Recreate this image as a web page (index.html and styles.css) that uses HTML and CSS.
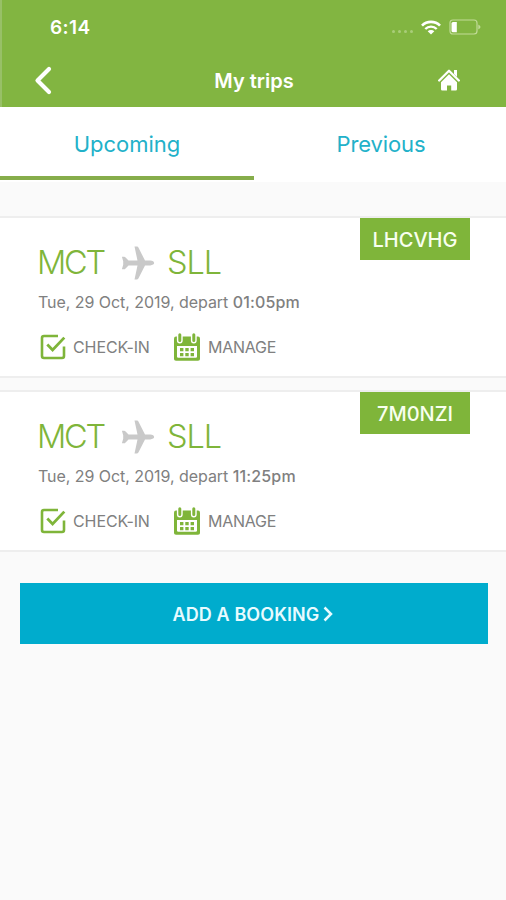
FILE: index.html
```html
<!DOCTYPE html>
<html lang="en">
<head>
<meta charset="utf-8">
<title>My trips</title>
<link rel="stylesheet" href="styles.css">
</head>
<body>
<svg class="sprite" aria-hidden="true">
  <symbol id="plane" viewBox="0 0 34 34">
    <path d="M14 .6h2.600q.9 0 1.300.8l6.600 13.200h5.200q3.800.4 3.900 2.400-.1 2-3.900 2.400h-5.200l-6.600 13.200q-.4.800-1.300.8H14l3-14H8l-3.200 3.400q-.4.500-1 .5H1.400l1.300-4.600v-3.400L1.400 10.700h2.400q.6 0 1 .5L8 14.600h9z" fill="#c9c9c9"/>
  </symbol>
  <symbol id="check" viewBox="0 0 26 26">
    <path d="M18 2H4Q2 2 2 4v18q0 2 2 2h18q2 0 2-2v-9.500" fill="none" stroke="#7fb53a" stroke-width="2.600"/>
    <path d="M7.300 10.600l5.300 5.400L24.300 3.600" fill="none" stroke="#7fb53a" stroke-width="2.800"/>
  </symbol>
  <symbol id="calendar" viewBox="0 0 28 28">
    <path d="M3 3.500h22q2 0 2 2V26q0 1.800-2 1.800H3q-2 0-2-1.800V5.500q0-2 2-2z" fill="#7fb53a"/>
    <path d="M4 13h20v10.500q0 1.300-1.300 1.300H5.300Q4 24.800 4 23.500z" fill="#fff"/>
    <g fill="none" stroke-linecap="round"><path d="M6.800 2.500v5M20.800 2.500v5" stroke="#fff" stroke-width="5.800"/><path d="M6.800 1.800v5.600M20.800 1.800v5.600" stroke="#7fb53a" stroke-width="3"/></g>
    <path d="M7 15h3.400v3.200H7zM12.300 15h3.400v3.200h-3.400zM17.600 15H21v3.200h-3.400zM7 20h3.400v3.200H7zM12.300 20h3.400v3.200h-3.400zM17.600 20H21v3.200h-3.400z" fill="#7fb53a"/>
  </symbol>
</svg>

<header class="header">
  <div class="status">
    <span class="time">6:14</span>
    <div class="indicators">
      <span class="signal"><i></i><i></i><i></i><i></i></span>
      <svg class="wifi" viewBox="0 0 20 15"><g fill="none" stroke="#fff"><path d="M1 5.600a12.800 12.800 0 0 1 18 0" stroke-width="2.700"/><path d="M4.300 9a8 8 0 0 1 11.400 0" stroke-width="2.400"/></g><path d="M6.700 11.300a4.700 4.700 0 0 1 6.600 0L10 14.600z" fill="#fff"/></svg>
      <svg class="battery" viewBox="0 0 32 16"><path d="M4 1h21q3 0 3 3v8q0 3-3 3H4q-3 0-3-3V4q0-3 3-3z" fill="none" stroke="#c1db98" stroke-width="1.200"/><path d="M29.300 5.500q4.400 2.500 0 5z" fill="#c1db98"/><path d="M4 3h3.800v10.200H4q-1.500 0-1.500-1.500V4.500Q2.500 3 4 3z" fill="#fff"/></svg>
    </div>
  </div>
  <div class="titlebar">
    <svg class="back" viewBox="0 0 18 30"><path d="M15 3L3.500 14.500L15 26" fill="none" stroke="#fff" stroke-width="4.200" stroke-linecap="round" stroke-linejoin="round"/></svg>
    <h1 class="title">My trips</h1>
    <svg class="home" viewBox="0 0 22 22"><path d="M1.200 11.500L11 1.800l9.800 9.700" fill="none" stroke="#fff" stroke-width="2.300" stroke-linecap="round" stroke-linejoin="round"/><path d="M16 1h3v7l-3-3z" fill="#fff"/><path d="M11 5.300l8 7.900v7.100q0 1.200-1.200 1.200h-4.600v-5H9v5H4.200Q3 21.500 3 20.300v-7.100z" fill="#fff"/></svg>
  </div>
</header>

<nav class="tabs">
  <a class="tab tab-active">Upcoming</a>
  <a class="tab tab-previous">Previous</a>
</nav>

<main class="trips">
  <article class="trip">
    <div class="details">
      <h2 class="route"><span class="origin">MCT</span><svg class="plane"><use href="#plane"/></svg><span class="destination">SLL</span></h2>
      <p class="departure">Tue, 29 Oct, 2019, depart <b>01:05pm</b></p>
      <div class="actions">
        <a class="action checkin"><svg class="check"><use href="#check"/></svg><span>CHECK-IN</span></a>
        <a class="action manage"><svg class="calendar"><use href="#calendar"/></svg><span>MANAGE</span></a>
      </div>
    </div>
    <span class="code">LHCVHG</span>
  </article>
  <article class="trip">
    <div class="details">
      <h2 class="route"><span class="origin">MCT</span><svg class="plane"><use href="#plane"/></svg><span class="destination">SLL</span></h2>
      <p class="departure">Tue, 29 Oct, 2019, depart <b>11:25pm</b></p>
      <div class="actions">
        <a class="action checkin"><svg class="check"><use href="#check"/></svg><span>CHECK-IN</span></a>
        <a class="action manage"><svg class="calendar"><use href="#calendar"/></svg><span>MANAGE</span></a>
      </div>
    </div>
    <span class="code">7M0NZI</span>
  </article>
</main>

<button class="add"><span>ADD A BOOKING</span><svg class="chevron" viewBox="0 0 10 16"><path d="M1.500 1.500L8 8l-6.500 6.500" fill="none" stroke="#e8fbff" stroke-width="2.500"/></svg></button>
</body>
</html>
```

FILE: styles.css
```css
* { box-sizing: border-box; }
body {
  margin: 0;
  min-height: 900px;
  background: #fafafa;
  font-family: Inter, "Liberation Sans", sans-serif;
  color: #808080;
}
.sprite { position: absolute; width: 0; height: 0; }
svg { display: block; flex: none; }

.header {
  height: 107px;
  background: #82b541;
  border-left: 2px solid #98c067;
  color: #fff;
}
.status {
  display: flex;
  justify-content: space-between;
  align-items: center;
  height: 54px;
  padding: 0 25px 0 48px;
}
.time { font-size: 19px; font-weight: 600; letter-spacing: 0.4px; }
.indicators { display: flex; align-items: center; }
.signal { display: flex; gap: 3px; margin: 9px 8px 0 0; }
.signal i { width: 3px; height: 3px; border-radius: 50%; background: #a9cd79; }
.wifi { width: 20px; height: 15px; margin-right: 8px; }
.battery { width: 32px; height: 16px; }
.titlebar {
  display: grid;
  grid-template-columns: 60px 1fr 60px;
  align-items: center;
  height: 53px;
}
.back { width: 18px; height: 30px; margin-left: 32px; }
.title { margin: 0; font-size: 20px; font-weight: 600; text-align: center; line-height: 24px; }
.home { width: 22px; height: 22px; margin: -1px 0 0 -8px; }

.tabs { display: flex; height: 75px; background: #fff; }
.tab {
  flex: 0 0 254px;
  height: 73px;
  padding-top: 23px;
  border-bottom: 4px solid transparent;
  color: #22b1c9;
  font-size: 22px;
  line-height: 28px;
  text-align: center;
}
.tab-active { border-color: #86ad4b; }
.tab-previous { letter-spacing: -0.1px; }

.trips { display: grid; gap: 12px; padding-top: 34px; }
.trip {
  display: flex;
  justify-content: space-between;
  height: 162px;
  padding: 0 36px 0 38px;
  background: #fff;
  border: solid #eeeeee;
  border-width: 2px 0;
}
.details { padding-top: 25px; }
.route {
  display: flex;
  align-items: center;
  height: 40px;
  margin: 0;
  color: #7fb53a;
  font-size: 32.5px;
  font-weight: 300;
  line-height: 40px;
}
.origin { width: 83px; margin-left: -1px; letter-spacing: -2.2px; }
.plane { width: 35px; height: 34px; }
.destination { margin-left: 12px; letter-spacing: -1.1px; }
.departure {
  margin: 9px 0 0;
  font-size: 16px;
  line-height: 20px;
  letter-spacing: -0.05px;
  white-space: nowrap;
}
.departure b { font-weight: 500; letter-spacing: 0.15px; }
.actions { display: flex; height: 28px; margin-top: 21px; }
.action { display: flex; align-items: center; font-size: 16px; letter-spacing: -0.1px; }
.checkin { width: 135px; padding-left: 2px; }
.check { width: 26px; height: 26px; margin-right: 7px; }
.manage { letter-spacing: -0.25px; }
.calendar { width: 28px; height: 28px; margin-right: 7px; }
.code {
  width: 110px;
  height: 42px;
  background: #7fb53a;
  color: #f8ffef;
  font-size: 20px;
  font-weight: 500;
  line-height: 44px;
  text-align: center;
}

.add {
  display: flex;
  align-items: center;
  justify-content: center;
  gap: 4px;
  width: 468px;
  height: 61px;
  margin: 31px 0 0 20px;
  padding: 1px 2px 0 0;
  border: 0;
  background: #00accd;
  color: #e8fbff;
  font-family: inherit;
  font-size: 18px;
  font-weight: 600;
}
.add span { letter-spacing: 0.1px; }
.chevron { width: 10px; height: 16px; }
```
